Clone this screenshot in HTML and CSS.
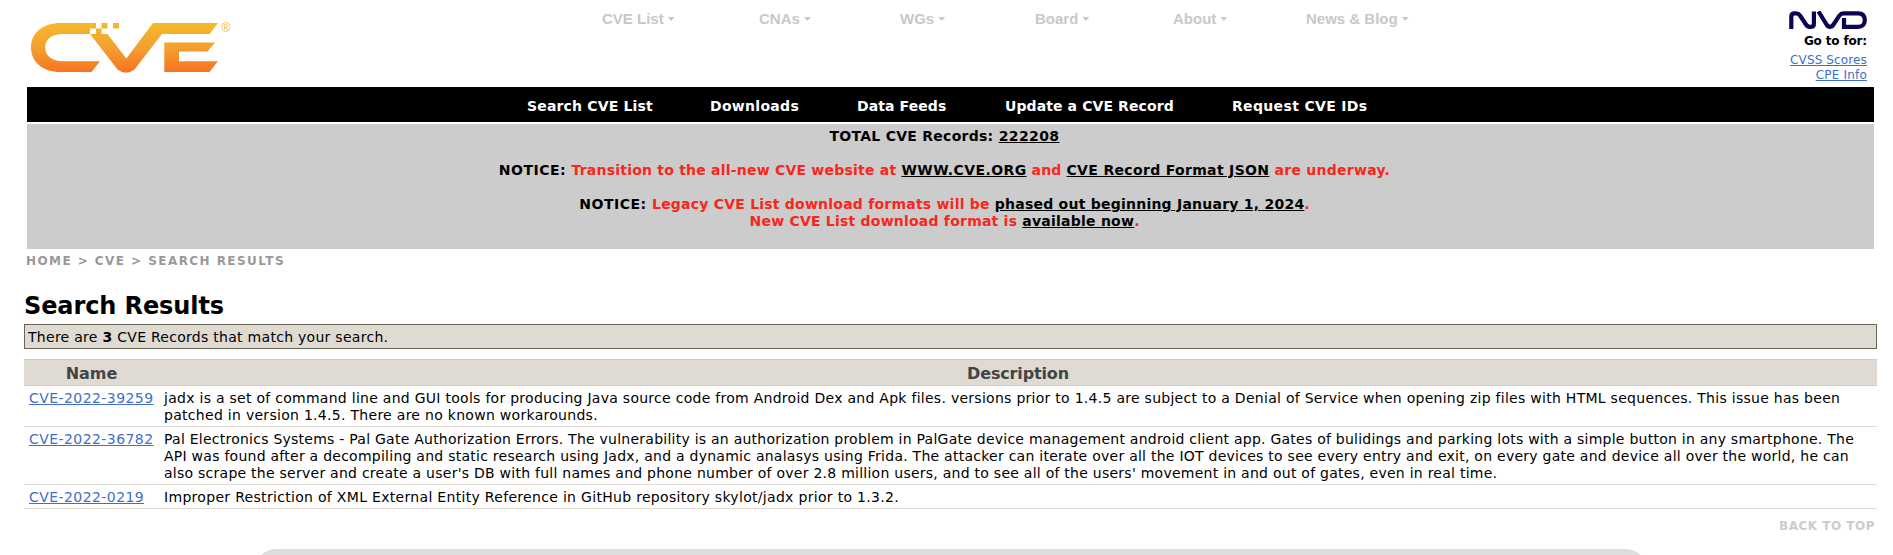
FILE: index.html
```html
<!DOCTYPE html>
<html lang="en">
<head>
<meta charset="utf-8">
<title>CVE - Search Results</title>
<link rel="stylesheet" href="styles.css">
</head>
<body>
<header class="header">
  <svg class="logo" viewBox="30 20 204 58" width="204" height="58" role="img" aria-label="CVE">
    <defs>
      <linearGradient id="fire" gradientUnits="userSpaceOnUse" x1="0" y1="23" x2="0" y2="72">
        <stop offset="0" stop-color="#f6b92b"/>
        <stop offset=".5" stop-color="#f3a030"/>
        <stop offset="1" stop-color="#f87422"/>
      </linearGradient>
    </defs>
    <g fill="url(#fire)">
      <path d="M96 23H61C42 23 31 33.500 31 47.500S42 72 61 72H91.500L100 61.200H63C52 61.200 45.200 56 45.200 47.500S52 34 63 34H90V28.500H96Z"/>
      <path d="M96 28.500H101.500V34H107.500L126.300 58.500L153 23H218L209.500 34H162L134.500 69.500Q126 76 117.500 69.500L90 34H96Z"/>
      <path d="M101.500 23h6v5.500h-6zM113 23h6v5.500h-6z"/>
      <path d="M164.300 42.500H215L207.500 51.500H179V61.200H218L209.500 72H164.300Z"/>
      <text class="reg" x="221.500" y="31.500">®</text>
    </g>
  </svg>
  <nav class="topnav">
    <a>CVE List<i></i></a><a>CNAs<i></i></a><a>WGs<i></i></a><a>Board<i></i></a><a>About<i></i></a><a>News &amp; Blog<i></i></a>
  </nav>
  <div class="nvd">
    <svg viewBox="1789 11 78 18" width="78" height="18" role="img" aria-label="NVD">
      <g fill="none" stroke="#0b0554" stroke-width="4.200">
        <path d="M1791.300 29V16.500Q1791.300 13.400 1794.500 13.400H1796Q1798.500 13.400 1800 15.500L1806 24.500Q1807.500 26.800 1810 26.800H1811Q1813.900 26.800 1813.900 24V11.400"/>
        <path d="M1818.500 11.400L1826.500 24.500Q1828 26.800 1830 26.800T1833.500 24.500L1839.500 15.400Q1841 13.400 1843.500 13.400H1858Q1864.800 13.400 1864.800 20.100T1858 26.800H1844V18"/>
      </g>
    </svg>
    <b class="goto">Go to for:</b>
    <a class="link cvss">CVSS Scores</a>
    <a class="link cpe">CPE Info</a>
  </div>
</header>

<nav class="mainnav">
  <a class="m1">Search CVE List</a><a class="m2">Downloads</a><a class="m3">Data Feeds</a><a class="m4">Update a CVE Record</a><a class="m5">Request CVE IDs</a>
</nav>

<section class="notice">
  <p><span class="k1">TOTAL CVE Records: </span><a class="k2">222208</a></p>
  <p class="gap"><span class="k3">NOTICE: </span><em class="k4">Transition to the all-new CVE website at </em><a class="k2">WWW.CVE.ORG</a><em class="k5"> and </em><a class="k6">CVE Record Format JSON</a><em class="k1"> are underway.</em></p>
  <p class="gap"><span class="k3">NOTICE: </span><em class="k4">Legacy CVE List download formats will be </em><a class="k7">phased out beginning January 1, 2024</a><em>.</em></p>
  <p><em class="k4">New CVE List download format is </em><a class="k7">available now</a><em>.</em></p>
</section>

<div class="crumbs">HOME &gt; CVE &gt; SEARCH RESULTS</div>

<main class="content">
  <h2 class="title">Search Results</h2>
  <div class="summary">There are <b>3</b> CVE Records that match your search.</div>
  <table class="results">
    <thead><tr><th class="name">Name</th><th class="desc">Description</th></tr></thead>
    <tbody>
      <tr>
        <td><a class="link">CVE-2022-39259</a></td>
        <td><span class="d1">jadx is a set of command line and GUI tools for producing Java source code from Android Dex and Apk files. versions prior to 1.4.5 are subject to a Denial of Service when opening zip files with HTML sequences. This issue has been</span><br><span class="d2">patched in version 1.4.5. There are no known workarounds.</span></td>
      </tr>
      <tr>
        <td><a class="link">CVE-2022-36782</a></td>
        <td><span class="d3">Pal Electronics Systems - Pal Gate Authorization Errors. The vulnerability is an authorization problem in PalGate device management android client app. Gates of bulidings and parking lots with a simple button in any smartphone. The</span><br><span class="d4">API was found after a decompiling and static research using Jadx, and a dynamic analasys using Frida. The attacker can iterate over all the IOT devices to see every entry and exit, on every gate and device all over the world, he can</span><br><span class="d4">also scrape the server and create a user's DB with full names and phone number of over 2.8 million users, and to see all of the users' movement in and out of gates, even in real time.</span></td>
      </tr>
      <tr>
        <td><a class="link">CVE-2022-0219</a></td>
        <td><span class="d5">Improper Restriction of XML External Entity Reference in GitHub repository skylot/jadx prior to 1.3.2.</span></td>
      </tr>
    </tbody>
  </table>
  <div class="backtop">BACK TO TOP</div>
</main>
<footer class="footer"></footer>
</body>
</html>
```
FILE: styles.css
```css
* { box-sizing: border-box; }

body {
  margin: 0;
  height: 555px;
  background: #fff;
  color: #000;
  font: 14px/17px Verdana, "DejaVu Sans", sans-serif;
}

p, h2 { margin: 0; }

.link { color: #416ecb; text-decoration: underline; }

/* Header */
.header {
  display: flex;
  align-items: flex-start;
  height: 87px;
  padding-left: 30px;
}
.logo { flex: none; margin-top: 20px; }
.reg { font: 12px "Liberation Sans", Arial, sans-serif; }

.topnav {
  display: grid;
  grid-template-columns: 157px 141px 135px 138px 133px 110px;
  flex: none;
  margin: 10px 0 0 368px;
  color: #c8c8c8;
  font: bold 15px/18px Arial, "Liberation Sans", sans-serif;
  white-space: nowrap;
}
.topnav i {
  display: inline-block;
  width: 7px;
  height: 4px;
  margin-left: 4px;
  background: #c8c8c8;
  clip-path: polygon(0 0, 100% 0, 50% 100%);
  vertical-align: 3px;
}

.nvd {
  display: flex;
  flex-direction: column;
  align-items: flex-end;
  margin: 11px 26px 0 auto;
  font-size: 12px;
  line-height: 15px;
}
.goto { margin: 5px 0 4px; letter-spacing: -.15px; }
.cvss { letter-spacing: .13px; }
.cpe { letter-spacing: .2px; }

/* Black menu bar */
.mainnav {
  display: flex;
  height: 35px;
  margin: 0 19px 2px 27px;
  padding: 11px 0 0 500px;
  background: #000;
  color: #fff;
  font-weight: bold;
  white-space: nowrap;
}
.mainnav a { flex: none; }
.m1 { width: 183px; letter-spacing: .17px; }
.m2 { width: 147px; letter-spacing: .3px; }
.m3 { width: 148px; letter-spacing: .1px; }
.m4 { width: 227px; letter-spacing: .1px; }
.m5 { letter-spacing: .34px; }

/* Notices */
.notice {
  height: 125px;
  margin: 0 19px 0 27px;
  padding: 4px 12px 0 0;
  background: #ccc;
  font-weight: bold;
  text-align: center;
}
.notice em { color: #f9261c; font-style: normal; }
.notice a { text-decoration: underline; }
.gap { padding-top: 17px; }
.k1 { letter-spacing: .27px; }
.k2 { letter-spacing: .4px; }
.k3 { letter-spacing: .5px; }
.k4 { letter-spacing: .22px; }
.k5 { letter-spacing: .16px; }
.k6 { letter-spacing: .33px; }
.k7 { letter-spacing: .235px; }

.crumbs {
  padding: 4px 0 0 26px;
  color: #999;
  font-size: 12px;
  font-weight: bold;
  letter-spacing: 1.44px;
}

/* Results */
.content { margin: 21px 16px 0 24px; }
.title {
  height: 33px;
  font-size: 24px;
  line-height: 30px;
  letter-spacing: -.1px;
}
.summary {
  height: 25px;
  padding: 4px 3px 2px;
  border: 1px solid #6a6757;
  background: #dfdad2;
  letter-spacing: .28px;
}
.results {
  width: 100%;
  margin-top: 10px;
  border-spacing: 0;
  table-layout: fixed;
}
.results th {
  height: 27px;
  padding: 1px 0 0;
  border-top: 1px solid #ccc;
  border-bottom: 1px solid #ccc;
  background: #dfdad2;
  color: #444;
  font-size: 16px;
}
.name { width: 135px; }
.desc { letter-spacing: -.15px; }
.results td {
  padding: 4px 4px 2px 5px;
  border-bottom: 1px solid #dfdad2;
  vertical-align: top;
  white-space: nowrap;
}
.results .link { letter-spacing: .43px; }
.d1 { letter-spacing: .275px; }
.d2 { letter-spacing: .29px; }
.d3 { letter-spacing: .244px; }
.d4 { letter-spacing: .254px; }
.d5 { letter-spacing: .31px; }

.backtop {
  margin-top: 9px;
  padding-right: 2px;
  color: #ccc;
  font-size: 12px;
  font-weight: bold;
  letter-spacing: .5px;
  text-align: right;
}

/* Only the top edge of the rounded panel shows */
.footer {
  height: 6px;
  margin: 14px 247px 0 256px;
  background: #ddd;
  clip-path: inset(0 0 -34px 0 round 20px);
}
```
